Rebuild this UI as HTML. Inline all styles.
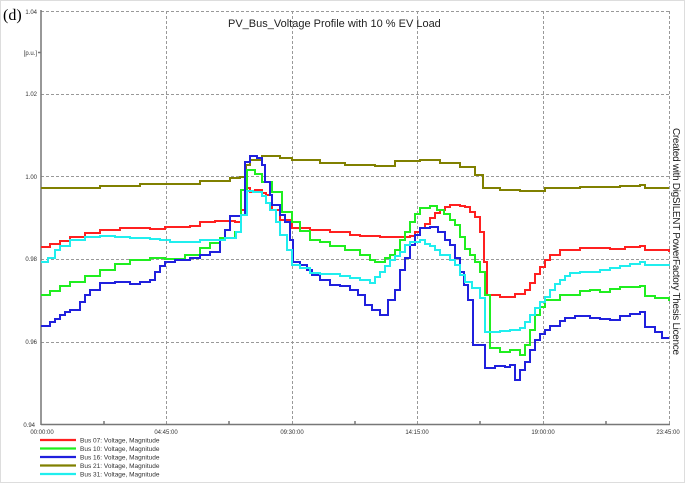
<!DOCTYPE html>
<html><head><meta charset="utf-8"><style>
html,body{margin:0;padding:0;background:#fff}
body{width:685px;height:484px;overflow:hidden;position:relative;font-family:"Liberation Sans",sans-serif}
</style></head><body>
<svg width="685" height="484" viewBox="0 0 685 484" xmlns="http://www.w3.org/2000/svg" style="position:absolute;left:0;top:0">
<rect x="0.5" y="0.5" width="684" height="482" fill="none" stroke="#ddd"/>
<g stroke="#999" stroke-dasharray="3,2" stroke-width="1">
<line x1="41" y1="11.5" x2="669" y2="11.5"/>
<line x1="41" y1="94.5" x2="669" y2="94.5"/>
<line x1="41" y1="176.5" x2="669" y2="176.5"/>
<line x1="41" y1="259.5" x2="669" y2="259.5"/>
<line x1="41" y1="342.5" x2="669" y2="342.5"/>
<line x1="166.5" y1="11" x2="166.5" y2="424"/>
<line x1="292.5" y1="11" x2="292.5" y2="424"/>
<line x1="417.5" y1="11" x2="417.5" y2="424"/>
<line x1="543.5" y1="11" x2="543.5" y2="424"/>
<line x1="669.5" y1="11" x2="669.5" y2="424"/>
</g>
<g stroke="#777" stroke-width="1.5">
<line x1="41" y1="10" x2="41" y2="425"/>
<line x1="41" y1="424.5" x2="670" y2="424.5"/>
<line x1="38" y1="52.5" x2="41" y2="52.5"/>
<line x1="104" y1="421" x2="104" y2="424"/>
<line x1="229" y1="421" x2="229" y2="424"/>
<line x1="355" y1="421" x2="355" y2="424"/>
<line x1="480" y1="421" x2="480" y2="424"/>
<line x1="606" y1="421" x2="606" y2="424"/>
</g>
<g font-size="6" fill="#333" text-anchor="end">
<text x="37" y="14">1.04</text>
<text x="37" y="55" font-size="6">[p.u.]</text>
<text x="37" y="96">1.02</text>
<text x="37" y="179">1.00</text>
<text x="37" y="261">0.98</text>
<text x="37" y="344">0.96</text>
<text x="35" y="427">0.94</text>
</g>
<g font-size="6" fill="#333" text-anchor="middle">
<text x="42" y="434">00:00:00</text>
<text x="166" y="434">04:45:00</text>
<text x="292" y="434">09:30:00</text>
<text x="417" y="434">14:15:00</text>
<text x="543" y="434">19:00:00</text>
<text x="668" y="434">23:45:00</text>
</g>
<text x="3" y="20" font-family="Liberation Serif" font-size="16" fill="#000">(d)</text>
<text x="228" y="27" font-size="11" fill="#222">PV_Bus_Voltage Profile with 10 % EV Load</text>
<text transform="translate(673,128) rotate(90)" font-size="10" fill="#222" textLength="227">Created with DigSILENT PowerFactory Thesis Licence</text>
<g fill="none" stroke-width="2">
<path stroke="#808000" d="M41 188H100V186H140V184H165V184H200V181H230V178H240V177H246V165H250V160H262V156H280V158H292V160H320V163H345V165H375V166H395V161H420V160H440V163H460V167H475V175H483V188H500V190H520V191H545V188H580V187H620V186H640V185H645V188H669"/>
<path stroke="#ff2020" d="M41 247H50V244H60V241H70V237H85V233H100V230H120V228H150V229H165V227H190V226H200V222H215V221H235V222H241V210H245V188H250V192H255V190H262V193H266V195H272V210H280V220H292V228H310V230H330V232H350V235H360V236H380V237H410V236H415V232H420V228H425V224H430V218H435V213H440V210H445V207H450V205H460V206H465V207H470V212H475V217H480V232H484V262H487V295H500V297H515V294H525V290H530V283H535V274H540V267H545V260H550V255H560V250H580V248H610V249H625V247H640V246H645V250H669V252"/>
<path stroke="#20ee20" d="M41 295H50V291H60V286H70V282H85V276H100V270H115V264H130V260H150V258H165V259H185V255H200V248H210V243H220V238H235V232H241V190H247V170H255V174H262V182H272V192H282V212H292V222H300V231H310V240H320V242H330V246H345V250H360V255H370V260H375V262H385V258H390V255H395V250H400V240H405V232H410V222H415V214H420V208H430V206H437V210H444V214H450V220H455V225H460V237H465V249H470V255H475V262H480V272H485V295H490V348H500V352H510V350H520V355H525V345H530V330H535V315H540V307H545V300H560V295H580V291H590V290H600V292H610V289H620V287H640V286H645V296H655V298H669V301"/>
<path stroke="#2020dd" d="M41 326H50V322H55V319H60V315H65V312H70V310H80V302H85V295H90V290H100V283H115V282H130V284H140V282H150V280H155V272H160V266H165V262H175V260H190V258H200V255H210V252H220V240H225V230H230V216H241V215H245V162H250V156H257V158H262V165H265V182H270V195H272V205H280V215H285V222H290V240H293V262H300V265H307V270H312V275H320V280H330V285H340V286H350V290H358V295H365V305H372V310H380V315H388V300H395V290H400V270H405V258H410V245H415V235H420V228H430V227H438V232H445V240H450V245H455V258H460V272H464V285H468V300H473V345H485V368H495V366H505V367H510V365H515V380H520V370H525V362H530V350H535V340H540V334H545V330H550V326H560V321H565V318H575V316H590V318H600V319H610V320H620V316H630V314H640V312H645V327H655V332H662V338H669"/>
<path stroke="#20eeee" d="M41 262H48V258H55V250H60V246H70V240H85V237H100V236H115V237H130V238H150V239H160V240H170V242H190V242H200V240H215V240H225V238H236V232H241V215H247V191H253V192H262V196H266V203H270V210H276V222H280V235H287V250H292V265H300V268H310V273H320V274H340V276H350V278H360V280H370V283H375V277H380V272H385V266H390V260H395V256H400V252H405V245H410V242H420V240H425V244H430V246H435V250H440V255H450V260H455V265H460V275H465V282H472V288H480V298H485V332H500V331H510V330H520V328H525V322H530V315H535V308H540V302H545V297H550V290H555V284H560V280H565V276H570V273H580V272H600V270H610V268H620V266H630V264H640V262H645V265H669V266"/>
</g>
<g stroke-width="2.2">
<line x1="40" y1="440" x2="76" y2="440" stroke="#ff2020"/>
<line x1="40" y1="448.5" x2="76" y2="448.5" stroke="#20ee20"/>
<line x1="40" y1="457" x2="76" y2="457" stroke="#2020dd"/>
<line x1="40" y1="465.5" x2="76" y2="465.5" stroke="#808000"/>
<line x1="40" y1="474" x2="76" y2="474" stroke="#20eeee"/>
</g>
<g font-size="6.5" fill="#333">
<text x="80" y="442.5">Bus 07: Voltage, Magnitude</text>
<text x="80" y="451">Bus 10: Voltage, Magnitude</text>
<text x="80" y="459.5">Bus 16: Voltage, Magnitude</text>
<text x="80" y="468">Bus 21: Voltage, Magnitude</text>
<text x="80" y="476.5">Bus 31: Voltage, Magnitude</text>
</g>
</svg>
</body></html>
